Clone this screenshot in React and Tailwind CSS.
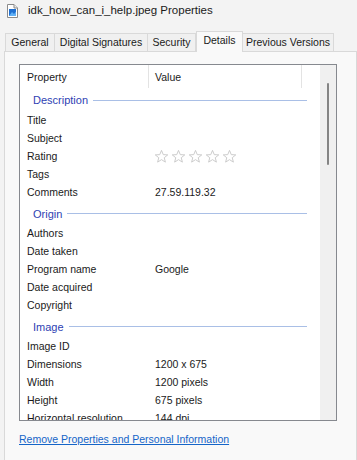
import React from "react";

const tabs = [
  { name: "General", w: "w-[50px]" },
  { name: "Digital Signatures", w: "w-[94px]" },
  { name: "Security", w: "w-[49px]" },
  { name: "Details", w: "w-[47px]", active: true },
  { name: "Previous Versions", w: "w-[92px]" },
];

const sections = [
  {
    title: "Description",
    rows: [
      ["Title", ""],
      ["Subject", ""],
      ["Rating", "stars"],
      ["Tags", ""],
      ["Comments", "27.59.119.32"],
    ],
  },
  {
    title: "Origin",
    rows: [
      ["Authors", ""],
      ["Date taken", ""],
      ["Program name", "Google"],
      ["Date acquired", ""],
      ["Copyright", ""],
    ],
  },
  {
    title: "Image",
    rows: [
      ["Image ID", ""],
      ["Dimensions", "1200 x 675"],
      ["Width", "1200 pixels"],
      ["Height", "675 pixels"],
      ["Horizontal resolution", "144 dpi"],
    ],
  },
];

const FileIcon = () => (
  <svg width="11" height="14" viewBox="0 0 11 14">
    <path d="M0.5 0.5 H7 L10.5 4 V13.5 H0.5 Z" fill="#ffffff" stroke="#8a8a8a" />
    <path d="M7 0.5 V4 H10.5" fill="#e8e8e8" stroke="#8a8a8a" />
    <rect x="2" y="5" width="7" height="7" fill="#1f6fd1" />
    <path d="M2 12 L5 8 L7 10 L9 7.5 V12 Z" fill="#5fb0f5" />
  </svg>
);

const Star = () => (
  <svg width="15" height="15" viewBox="0 0 24 24">
    <path
      d="M12 2.2 L14.8 9 L22 9.4 L16.4 13.9 L18.2 21 L12 17 L5.8 21 L7.6 13.9 L2 9.4 L9.2 9 Z"
      fill="none"
      stroke="#c9c9c9"
      strokeWidth="1.5"
      strokeLinejoin="round"
    />
  </svg>
);

const Row = ({ label, value }) => (
  <div className="flex items-center h-[18px] text-[#1a1a1a]">
    <div className="w-[135px] pl-[7px] whitespace-nowrap">{label}</div>
    <div className="whitespace-nowrap">
      {value === "stars" ? (
        <div className="flex gap-[2px] -ml-[1px]">
          <Star />
          <Star />
          <Star />
          <Star />
          <Star />
        </div>
      ) : (
        value
      )}
    </div>
  </div>
);

const App = () => {
  return (
    <div
      className="w-[357px] h-[460px] overflow-hidden bg-[#f3f3f3] text-[10.5px] text-[#1a1a1a]"
      style={{ fontFamily: '"Liberation Sans", Arial, sans-serif' }}
    >
      <div className="flex items-center h-[21px] pl-[7px] gap-[10px]">
        <FileIcon />
        <span className="text-[11.5px] text-[#1a1a1a]">idk_how_can_i_help.jpeg Properties</span>
      </div>

      <div className="flex items-end h-[30px] pl-[5px] pt-[10px]">
        {tabs.map((t) =>
          t.active ? (
            <div
              key={t.name}
              className={`${t.w} h-[21px] -mb-px relative z-10 flex items-center justify-center bg-[#f9f9f9] border border-b-0 border-[#d9d9d9] pb-[2px]`}
            >
              {t.name}
            </div>
          ) : (
            <div
              key={t.name}
              className={`${t.w} h-[18px] -ml-px first:ml-0 flex items-center justify-center bg-[#f0f0f0] border border-b-0 border-[#d9d9d9]`}
            >
              {t.name}
            </div>
          )
        )}
      </div>

      <div className="ml-[4px] h-[420px] bg-[#f9f9f9] border border-[#d9d9d9] pt-[12px] pl-[14px]">
        <div className="w-[318px] h-[357px] flex bg-white border border-[#86898f] overflow-hidden">
          <div className="flex-1 overflow-hidden">
            <div className="flex items-center h-[23.5px] relative">
              <div className="w-[128px] pl-[7px] pt-[2px]">Property</div>
              <div className="w-px h-[23px] bg-[#e3e3e3]"></div>
              <div className="w-[152px] pl-[6px] pt-[2px]">Value</div>
              <div className="w-px h-[23px] bg-[#e3e3e3]"></div>
            </div>
            {sections.map((s) => (
              <div key={s.title}>
                <div className="flex items-center h-[23.2px] pl-[13px] pr-[13px] gap-[5px]">
                  <span className="text-[#2e3fb3] text-[11px] pt-[1px]">{s.title}</span>
                  <div className="flex-1 h-px bg-[#a9bfe6]"></div>
                </div>
                {s.rows.map(([l, v]) => (
                  <Row key={l} label={l} value={v} />
                ))}
              </div>
            ))}
          </div>
          <div className="w-[16px] bg-[#f0f0f0] flex justify-center pt-[18px]">
            <div className="w-[2px] h-[82px] rounded-full bg-[#858585]"></div>
          </div>
        </div>
        <div className="mt-[11px]">
          <span className="text-[#1565c8] underline text-[10.5px]">
            Remove Properties and Personal Information
          </span>
        </div>
      </div>
    </div>
  );
};

export default App;
